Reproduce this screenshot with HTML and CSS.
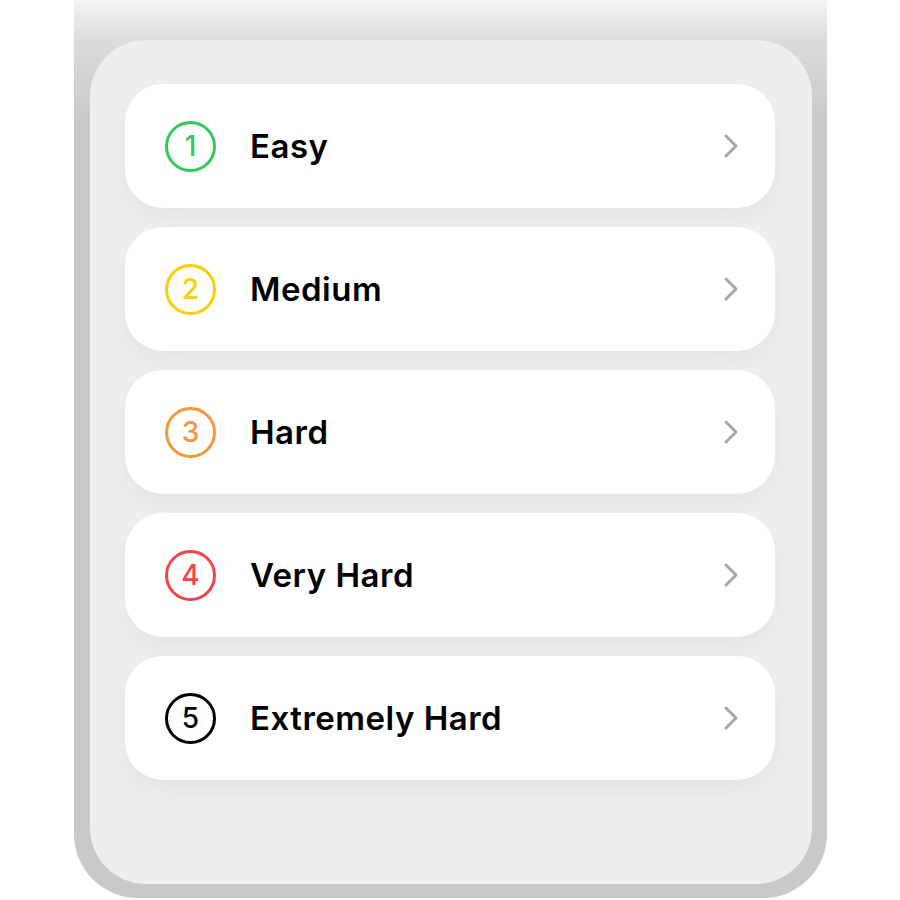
FILE: index.html
```
<!DOCTYPE html>
<html>
<head>
<meta charset="utf-8">
<link rel="stylesheet" href="styles.css">
</head>
<body>
<div class="frame">
  <div class="panel">
    <div class="row">
      <div class="num green">1</div>
      <div class="label">Easy</div>
      <svg class="chev" viewBox="0 0 16 26"><path d="M3 3 L13 13 L3 23" /></svg>
    </div>
    <div class="row">
      <div class="num yellow">2</div>
      <div class="label">Medium</div>
      <svg class="chev" viewBox="0 0 16 26"><path d="M3 3 L13 13 L3 23" /></svg>
    </div>
    <div class="row">
      <div class="num orange">3</div>
      <div class="label">Hard</div>
      <svg class="chev" viewBox="0 0 16 26"><path d="M3 3 L13 13 L3 23" /></svg>
    </div>
    <div class="row">
      <div class="num red">4</div>
      <div class="label">Very Hard</div>
      <svg class="chev" viewBox="0 0 16 26"><path d="M3 3 L13 13 L3 23" /></svg>
    </div>
    <div class="row">
      <div class="num black">5</div>
      <div class="label">Extremely Hard</div>
      <svg class="chev" viewBox="0 0 16 26"><path d="M3 3 L13 13 L3 23" /></svg>
    </div>
  </div>
</div>
</body>
</html>
```
FILE: styles.css
```
html, body {
  margin: 0;
  padding: 0;
  background: #ffffff;
}
body {
  width: 900px;
  height: 900px;
  overflow: hidden;
  font-family: Inter, "Noto Sans", sans-serif;
}
.frame {
  margin-left: 74px;
  width: 753px;
  height: 898px;
  box-sizing: border-box;
  padding: 40px 15px 14px 16px;
  border-radius: 0 0 64px 64px;
  background: linear-gradient(to bottom, #f4f4f4 0px, #dcdcdc 40px, #c9c9c9 120px, #c9c9c9 100%);
}
.panel {
  height: 100%;
  box-sizing: border-box;
  background: #eeeeee;
  border-radius: 56px;
  padding: 44px 37px 0 35px;
  display: flex;
  flex-direction: column;
  gap: 19px;
}
.row {
  height: 124px;
  background: #ffffff;
  border-radius: 38px;
  display: flex;
  align-items: center;
  padding: 0 36px 0 40px;
  box-shadow: 0 10px 20px rgba(0,0,0,0.04);
}
.num {
  width: 51px;
  height: 51px;
  box-sizing: border-box;
  border: 3.5px solid currentColor;
  border-radius: 50%;
  display: flex;
  align-items: center;
  justify-content: center;
  font-size: 28px;
  font-weight: 500;
  line-height: 1;
  flex: none;
}
.green { color: #34c759; }
.yellow { color: #ffcc00; }
.orange { color: #f7963a; }
.red { color: #f2434a; }
.black { color: #000000; }
.label {
  margin-left: 34px;
  flex: 1;
  font-size: 33px;
  font-weight: 600;
  color: #000000;
  letter-spacing: 0.5px;
}
.chev {
  width: 16px;
  height: 26px;
  fill: none;
  stroke: #a6a6a6;
  stroke-width: 3;
  stroke-linecap: round;
  stroke-linejoin: round;
}
```
